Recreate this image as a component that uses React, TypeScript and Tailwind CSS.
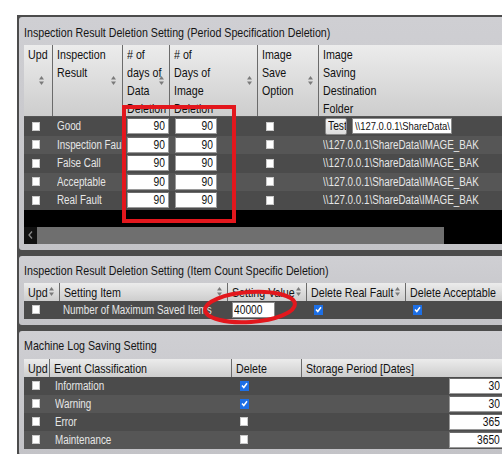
const font = "font-['Liberation_Sans','Arial',sans-serif]";

// Arial Narrow look: Liberation Sans squeezed horizontally
function T({ children, right = false }: { children: React.ReactNode; right?: boolean }) {
  return (
    <span
      className={`inline-block whitespace-nowrap scale-x-[0.82] ${right ? "origin-right" : "origin-left"}`}
    >
      {children}
    </span>
  );
}

function SortArrows() {
  return (
    <svg width="5" height="9" viewBox="0 0 5 9" className="shrink-0">
      <path d="M2.5 0 L5 3.5 L0 3.5 Z" fill="#7a7a7a" />
      <path d="M2.5 9 L5 5.5 L0 5.5 Z" fill="#7a7a7a" />
    </svg>
  );
}

function Box({ checked = false }: { checked?: boolean }) {
  if (checked) {
    return (
      <span className="inline-flex w-[9px] h-[10px] bg-[#1d6fe6] items-center justify-center">
        <svg width="7" height="7" viewBox="0 0 7 7">
          <path d="M1 3.6 L2.8 5.5 L6 1.3" stroke="white" strokeWidth="1.5" fill="none" />
        </svg>
      </span>
    );
  }
  return <span className="inline-block w-[8px] h-[9px] bg-white border border-[#c9c9c9]" />;
}

function NumBox({ value, className = "" }: { value: string; className?: string }) {
  return (
    <div
      className={`h-[16px] bg-white border border-[#9a9a9a] border-t-[#6a6a6a] text-[#111] text-[12.5px] leading-[14px] text-right pr-[3px] overflow-hidden ${className}`}
    >
      <T right>{value}</T>
    </div>
  );
}

function HeadCell({
  lines,
  arrow = true,
  last = false,
  className = "",
}: {
  lines: string[];
  arrow?: boolean;
  last?: boolean;
  className?: string;
}) {
  return (
    <div
      className={`flex items-center pl-[4px] pr-[5px] overflow-hidden ${
        last ? "" : "border-r border-[#6b6b6b]"
      } ${className}`}
    >
      <div className="self-start flex-1 min-w-0 leading-[18px] pt-[1px]">
        {lines.map((l) => (
          <div key={l}>
            <T>{l}</T>
          </div>
        ))}
      </div>
      {arrow && <SortArrows />}
    </div>
  );
}

function Title({ text, className = "" }: { text: string; className?: string }) {
  return (
    <div className={`flex items-center text-[13px] text-[#151515] ${className}`}>
      <T>{text}</T>
    </div>
  );
}

const periodRows = [
  { name: "Good", first: true },
  { name: "Inspection Fault" },
  { name: "False Call" },
  { name: "Acceptable" },
  { name: "Real Fault" },
];

function PeriodPanel() {
  const cols = "grid grid-cols-[29px_70px_47px_88px_61px_200px]";
  return (
    <div className="bg-[linear-gradient(#cfcfd3,#c3c3c7)] rounded-[3px] px-[5px] pb-[6px]">
      <Title text="Inspection Result Deletion Setting (Period Specification Deletion)" className="h-[28px] pt-[4px]" />
      <div
        className={`${cols} h-[72px] bg-[linear-gradient(#ececec,#cdcdcd)] border-b border-[#555] text-[13px] text-[#111]`}
      >
        <HeadCell lines={["Upd"]} className="pr-[8px]" />
        <HeadCell lines={["Inspection", "Result"]} className="pr-[6px]" />
        <HeadCell lines={["# of", "days of", "Data", "Deletion"]} />
        <HeadCell lines={["# of", "Days of", "Image", "Deletion"]} />
        <HeadCell lines={["Image", "Save", "Option"]} />
        <HeadCell lines={["Image", "Saving", "Destination", "Folder"]} arrow={false} last />
      </div>
      {periodRows.map((r, i) => (
        <div
          key={r.name}
          className={`${cols} h-[18.5px] items-center text-[12px] text-[#e6e6e6] ${
            i % 2 === 0 ? "bg-[#4b4b4b]" : "bg-[#565656]"
          }`}
        >
          <div className="pl-[8px] flex items-center">
            <Box />
          </div>
          <div className="pl-[4px] overflow-hidden">
            <T>{r.name}</T>
          </div>
          <div className="pl-[4px]">
            <NumBox value="90" className="w-[42px]" />
          </div>
          <div className="pl-[5px]">
            <NumBox value="90" className="w-[42px]" />
          </div>
          <div className="pl-[8px] flex items-center">
            <Box />
          </div>
          {r.first ? (
            <div className="flex items-center gap-[5px] pl-[6px]">
              <div className="w-[22px] h-[17px] pl-[2px] overflow-hidden bg-[linear-gradient(#f6f6f6,#dcdcdc)] border border-[#8a8a8a] rounded-[2px] text-[#111] text-[12.5px] leading-[15px]">
                <T>Test</T>
              </div>
              <div className="w-[100px] h-[16px] bg-white border border-[#8a8a8a] text-[#111] text-[11.5px] leading-[14px] pl-[2px] overflow-hidden">
                <T>\\127.0.0.1\ShareData\</T>
              </div>
            </div>
          ) : (
            <div className="pl-[4px]">
              <T>\\127.0.0.1\ShareData\IMAGE_BAK</T>
            </div>
          )}
        </div>
      ))}
      <div className="h-[17px] bg-black" />
      <div className="h-[17px] flex">
        <div className="w-[13px] bg-[#111] flex items-center justify-center">
          <svg width="5" height="8" viewBox="0 0 5 8">
            <path d="M4 0.5 L1 4 L4 7.5" stroke="#8a8a8a" strokeWidth="1.3" fill="none" />
          </svg>
        </div>
        <div className="w-[407px] bg-[#6f6f6f]" />
        <div className="flex-1 bg-black" />
      </div>
    </div>
  );
}

function CountPanel() {
  const cols = "grid grid-cols-[36px_168px_79px_99px_110px]";
  return (
    <div className="bg-[linear-gradient(#cfcfd3,#c3c3c7)] rounded-[3px] px-[5px] pb-[6px]">
      <Title text="Inspection Result Deletion Setting (Item Count Specific Deletion)" className="h-[27px] pt-[3px]" />
      <div className={`${cols} h-[18px] bg-[linear-gradient(#ececec,#cdcdcd)] text-[13px] text-[#111]`}>
        <HeadCell lines={["Upd"]} />
        <HeadCell lines={["Setting Item"]} />
        <HeadCell lines={["Setting Value"]} />
        <HeadCell lines={["Delete Real Fault"]} />
        <HeadCell lines={["Delete Acceptable"]} last />
      </div>
      <div className={`${cols} h-[18px] items-center bg-[#4b4b4b] text-[12px] text-[#e6e6e6]`}>
        <div className="pl-[8px] flex items-center">
          <Box />
        </div>
        <div className="pl-[3px] overflow-hidden">
          <T>Number of Maximum Saved Items</T>
        </div>
        <div className="pl-[4px]">
          <div className="w-[43px] h-[16px] bg-white border border-[#8a8a8a] text-[#111] text-[12.5px] leading-[14px] pl-[1px] overflow-hidden">
            <T>40000</T>
          </div>
        </div>
        <div className="pl-[7px] flex items-center">
          <Box checked />
        </div>
        <div className="pl-[7px] flex items-center">
          <Box checked />
        </div>
      </div>
    </div>
  );
}

const logRows = [
  { name: "Information", del: true, days: "30" },
  { name: "Warning", del: true, days: "30" },
  { name: "Error", del: false, days: "365" },
  { name: "Maintenance", del: false, days: "3650" },
];

function LogPanel() {
  const cols = "grid grid-cols-[26px_182px_70px_211px]";
  return (
    <div className="bg-[linear-gradient(#cfcfd3,#c3c3c7)] rounded-[3px] px-[5px] pb-[6px]">
      <Title text="Machine Log Saving Setting" className="h-[28px] pt-[3px]" />
      <div className={`${cols} h-[18px] bg-[linear-gradient(#ececec,#cdcdcd)] text-[13px] text-[#111]`}>
        <HeadCell lines={["Upd"]} arrow={false} />
        <HeadCell lines={["Event Classification"]} arrow={false} />
        <HeadCell lines={["Delete"]} arrow={false} />
        <HeadCell lines={["Storage Period [Dates]"]} arrow={false} last />
      </div>
      {logRows.map((r, i) => (
        <div
          key={r.name}
          className={`${cols} h-[18px] items-center text-[12px] text-[#e6e6e6] ${
            i % 2 === 0 ? "bg-[#4b4b4b]" : "bg-[#565656]"
          }`}
        >
          <div className="pl-[8px] flex items-center">
            <Box />
          </div>
          <div className="pl-[5px]">
            <T>{r.name}</T>
          </div>
          <div className="pl-[8px] flex items-center">
            <Box checked={r.del} />
          </div>
          <div className="flex justify-end">
            <NumBox value={r.days} className="w-[64px] pr-[12px]" />
          </div>
        </div>
      ))}
    </div>
  );
}

export default function App() {
  return (
    <div className={`relative w-[502px] h-[454px] overflow-hidden bg-white pt-[15px] pl-[17px] ${font}`}>
      <div className="w-[520px] bg-[#4c4c4c] p-[2px] flex flex-col gap-[6px]">
        <PeriodPanel />
        <CountPanel />
        <LogPanel />
      </div>
      {/* red call-out marks */}
      <div className="absolute left-[122px] top-[105px] w-[114px] h-[118px] border-[4px] border-[#e3171d]" />
      <svg className="absolute left-[200px] top-[286px]" width="100" height="42" viewBox="0 0 100 42">
        <ellipse cx="50" cy="21" rx="45" ry="15" fill="none" stroke="#e3171d" strokeWidth="4" transform="rotate(-4 50 21)" />
      </svg>
    </div>
  );
}
